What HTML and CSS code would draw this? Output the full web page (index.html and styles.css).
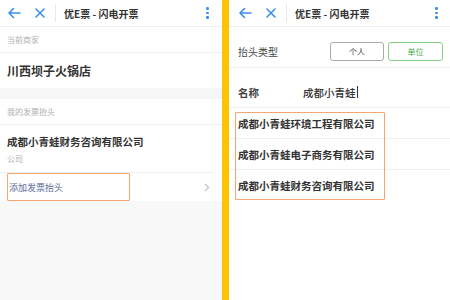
FILE: index.html
```html
<!DOCTYPE html>
<html lang="zh">
<head>
<meta charset="utf-8">
<link rel="stylesheet" href="styles.css">
</head>
<body>
<div class="screen">
  <div class="panel left">
    <div class="header">
      <svg class="icon back" width="14" height="12" viewBox="0 0 14 12"><path d="M13 6H2M6.5 1.5L2 6l4.5 4.5" fill="none" stroke="#3d8ee8" stroke-width="1.6" stroke-linecap="round" stroke-linejoin="round"/></svg>
      <svg class="icon close" width="12" height="12" viewBox="0 0 12 12"><path d="M2 2l8 8M10 2l-8 8" fill="none" stroke="#3d8ee8" stroke-width="1.6" stroke-linecap="round"/></svg>
      <span class="sep"></span>
      <span class="title">优E票 - 闪电开票</span>
      <span class="dots"><i></i><i></i><i></i></span>
    </div>
    <div class="label-row">当前商家</div>
    <div class="shop-row">川西坝子火锅店</div>
    <div class="gap"></div>
    <div class="label-row">我的发票抬头</div>
    <div class="company-row">
      <div class="company-name">成都小青蛙财务咨询有限公司</div>
      <div class="company-type">公司</div>
    </div>
    <div class="add-row">
      <span class="add-text">添加发票抬头</span>
      <svg class="chev" width="6" height="9" viewBox="0 0 6 9"><path d="M1 1l3.5 3.5L1 8" fill="none" stroke="#c4c4c4" stroke-width="1.3"/></svg>
      <span class="mark mark-add"></span>
    </div>
    <div class="fill"></div>
  </div>
  <div class="divider"></div>
  <div class="panel right">
    <div class="header">
      <svg class="icon back" width="14" height="12" viewBox="0 0 14 12"><path d="M13 6H2M6.5 1.5L2 6l4.5 4.5" fill="none" stroke="#3d8ee8" stroke-width="1.6" stroke-linecap="round" stroke-linejoin="round"/></svg>
      <svg class="icon close" width="12" height="12" viewBox="0 0 12 12"><path d="M2 2l8 8M10 2l-8 8" fill="none" stroke="#3d8ee8" stroke-width="1.6" stroke-linecap="round"/></svg>
      <span class="sep"></span>
      <span class="title">优E票 - 闪电开票</span>
      <span class="dots"><i></i><i></i><i></i></span>
    </div>
    <div class="type-row">
      <span class="field-label">抬头类型</span>
      <span class="btns">
        <span class="btn">个人</span>
        <span class="btn active">单位</span>
      </span>
    </div>
    <div class="name-row">
      <span class="field-label bold">名称</span>
      <span class="name-input">成都小青蛙<span class="caret"></span></span>
    </div>
    <div class="suggest">
      <div class="suggest-row">成都小青蛙环境工程有限公司</div>
      <div class="suggest-row">成都小青蛙电子商务有限公司</div>
      <div class="suggest-row">成都小青蛙财务咨询有限公司</div>
      <span class="mark mark-list"></span>
    </div>
  </div>
</div>
</body>
</html>
```

FILE: styles.css
```css
* { box-sizing: border-box; }
html, body { margin: 0; padding: 0; }
body {
  width: 450px;
  height: 300px;
  overflow: hidden;
  font-family: "Noto Sans CJK SC", "Noto Sans", sans-serif;
  color: #333;
  background: #fff;
}
.screen {
  display: flex;
  height: 300px;
}
.panel {
  display: flex;
  flex-direction: column;
  height: 300px;
}
.left {
  width: 222px;
  background: #fff;
}
.divider {
  width: 7px;
  background: #fdc300;
}
.right {
  flex: 1;
  background: #fff;
}
.header {
  height: 27px;
  flex: none;
  display: flex;
  align-items: center;
  border-bottom: 1px solid #efefef;
  padding-left: 7px;
  position: relative;
}
.right .header { padding-left: 9px; }
.icon.back { margin-right: 13px; }
.icon.close { margin-right: 9px; }
.sep {
  width: 1px;
  height: 18px;
  background: #e8e8e8;
  margin-right: 8px;
}
.title {
  font-size: 10px;
  font-weight: 700;
  color: #333;
}
.dots {
  margin-left: auto;
  margin-right: 13px;
  display: flex;
  flex-direction: column;
  gap: 2.2px;
}
.right .dots { margin-right: 12px; }
.dots i {
  display: block;
  width: 2.6px;
  height: 2.6px;
  border-radius: 50%;
  background: #3d8ee8;
}
.label-row {
  height: 26px;
  flex: none;
  display: flex;
  align-items: center;
  padding-left: 7px;
  font-size: 8px;
  color: #b0b0b0;
  border-bottom: 1px solid #f0f0f0;
}
.shop-row {
  height: 35px;
  flex: none;
  display: flex;
  align-items: center;
  padding-left: 7px;
  font-size: 12px;
  font-weight: 700;
  color: #333;
}
.gap {
  height: 11px;
  flex: none;
  background: #f6f6f6;
}
.company-row {
  height: 48px;
  flex: none;
  padding: 9px 0 0 7px;
  border-bottom: 1px solid #f0f0f0;
  margin-right: 8px;
}
.company-name {
  font-size: 10.5px;
  font-weight: 700;
  color: #333;
  line-height: 15px;
}
.company-type {
  font-size: 8px;
  color: #b0b0b0;
  margin-top: 4px;
  line-height: 11px;
}
.add-row {
  height: 28px;
  flex: none;
  display: flex;
  align-items: center;
  padding: 0 12px 0 9px;
  position: relative;
}
.add-text {
  font-size: 9px;
  color: #5d6c9c;
}
.chev { margin-left: auto; }
.fill {
  flex: 1;
  background: #f8f8f8;
}
.mark {
  position: absolute;
  border: 1.5px solid #f6a56c;
  border-radius: 1px;
  pointer-events: none;
}
.mark-add {
  left: 7px;
  top: 0;
  width: 123px;
  height: 28px;
}
.type-row {
  height: 41px;
  flex: none;
  display: flex;
  align-items: center;
  padding: 9px 0 0 9px;
  border-bottom: 1px solid #f0f0f0;
}
.field-label {
  font-size: 10px;
  color: #444;
}
.field-label.bold {
  font-weight: 700;
  width: 65px;
  font-size: 10.5px;
}
.btns {
  margin-left: auto;
  margin-right: 7px;
  display: flex;
  gap: 4px;
}
.btn {
  width: 54px;
  height: 19px;
  display: flex;
  align-items: center;
  justify-content: center;
  font-size: 8px;
  color: #444;
  border: 1.5px solid #aaa;
  border-radius: 3px;
}
.btn.active {
  width: 55px;
  color: #4aa84a;
  border-color: #86d286;
}
.name-row {
  height: 40px;
  flex: none;
  display: flex;
  align-items: center;
  padding: 9px 0 0 9px;
  border-bottom: 1px solid #f0f0f0;
}
.name-input {
  font-size: 10.5px;
  font-weight: 500;
  color: #333;
  display: flex;
  align-items: center;
}
.caret {
  display: inline-block;
  width: 1px;
  height: 12px;
  background: #333;
  margin-left: 1px;
}
.suggest {
  position: relative;
  flex: none;
}
.suggest-row {
  height: 31px;
  display: flex;
  align-items: center;
  padding-left: 9px;
  font-size: 10.5px;
  font-weight: 700;
  color: #333;
  border-bottom: 1px solid #f0f0f0;
}
.suggest-row:last-of-type { border-bottom: none; }
.mark-list {
  left: 6px;
  top: 4px;
  width: 150px;
  height: 88px;
}
```
